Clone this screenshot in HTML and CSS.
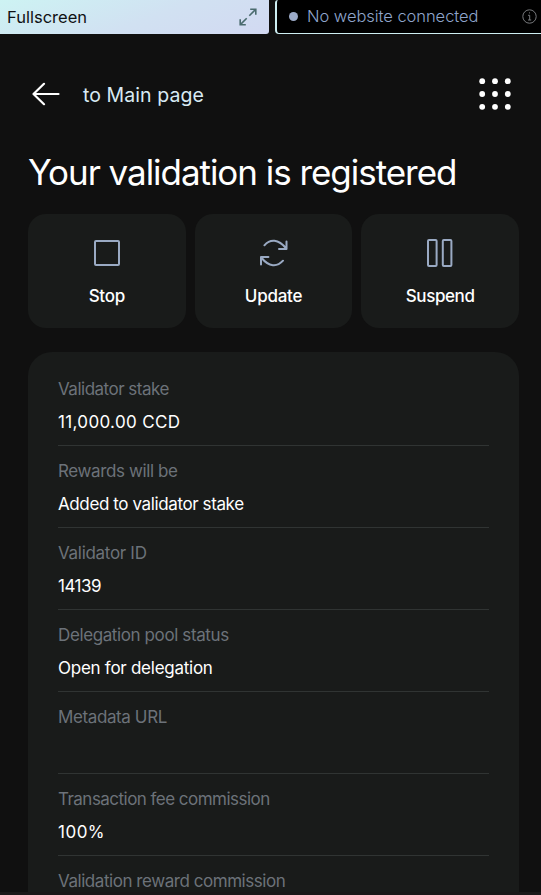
FILE: index.html
```
<!DOCTYPE html>
<html lang="en">
<head>
<meta charset="utf-8">
<title>Validation</title>
<link rel="stylesheet" href="styles.css">
</head>
<body>
<div class="topbar">
  <div class="fullscreen"><span>Fullscreen</span>
    <svg width="18" height="18" viewBox="0 0 18 18" fill="none" stroke="#4a6b6e" stroke-width="1.6"><path d="M10.3 7.7L16.4 1.6M11.2 1.2H16.8V6.8M7.7 10.3L1.6 16.4M1.2 11.2V16.8H6.8"/></svg>
  </div>
  <div class="connection"><i class="dot"></i><span class="status">No website connected</span>
    <svg width="15" height="15" viewBox="0 0 15 15" fill="none" stroke="#77797c"><circle cx="7.5" cy="7.5" r="6.7"/><path d="M6 6.3H7.7V11M6 11H9.2M7 3.9H8" /></svg>
  </div>
</div>
<header class="nav">
  <svg width="28" height="24" viewBox="0 0 28 24" fill="none" stroke="#fff" stroke-width="2.2" stroke-linecap="round" stroke-linejoin="round"><path d="M26.5 12H1.5M12 1.8L1.5 12L12 22.2"/></svg>
  <span class="back">to Main page</span>
  <svg class="menu" width="34" height="34" viewBox="0 0 34 34" fill="#fff"><circle cx="4.2" cy="4.2" r="2.9"/><circle cx="17" cy="4.2" r="2.9"/><circle cx="29.8" cy="4.2" r="2.9"/><circle cx="4.2" cy="17" r="2.9"/><circle cx="17" cy="17" r="2.9"/><circle cx="29.8" cy="17" r="2.9"/><circle cx="4.2" cy="29.8" r="2.9"/><circle cx="17" cy="29.8" r="2.9"/><circle cx="29.8" cy="29.8" r="2.9"/></svg>
</header>
<h1>Your validation is registered</h1>
<div class="actions">
  <div class="action">
    <svg width="32" height="32" viewBox="0 0 32 32" fill="none" stroke="#9aaac3" stroke-width="2"><rect x="4" y="4" width="24" height="24" rx="1"/></svg>
    <span>Stop</span>
  </div>
  <div class="action">
    <svg width="32" height="32" viewBox="0 0 32 32" fill="none" stroke="#9aaac3" stroke-width="2" stroke-linecap="round" stroke-linejoin="round"><path d="M7.4 8.3C13.2 1.8 21.2 1.8 29.2 11.5M29.5 4.6V12H22M26 23.7C20.1 30.2 12.1 30.2 4.2 20.5M4 27.4V20H11.4"/></svg>
    <span>Update</span>
  </div>
  <div class="action">
    <svg width="32" height="32" viewBox="0 0 32 32" fill="none" stroke="#9aaac3" stroke-width="2"><rect x="4" y="3" width="8.6" height="26" rx="1"/><rect x="18.8" y="3" width="8.6" height="26" rx="1"/></svg>
    <span class="t3">Suspend</span>
  </div>
</div>
<dl class="card">
  <div class="row"><dt class="t5">Validator stake</dt><dd class="w3">11,000.00 CCD</dd></div>
  <div class="row"><dt class="t4">Rewards will be</dt><dd class="t4">Added to validator stake</dd></div>
  <div class="row"><dt class="t2">Validator ID</dt><dd class="t6">14139</dd></div>
  <div class="row"><dt class="t4">Delegation pool status</dt><dd class="t3">Open for delegation</dd></div>
  <div class="row"><dt class="t4">Metadata URL</dt><dd></dd></div>
  <div class="row"><dt class="t7">Transaction fee commission</dt><dd class="w5">100%</dd></div>
  <div class="row"><dt class="t8">Validation reward commission</dt><dd></dd></div>
</dl>
<div class="edge"></div>
</body>
</html>
```
FILE: styles.css
```
* { box-sizing: border-box; margin: 0; padding: 0; }
body {
  height: 895px;
  overflow: hidden;
  background: #101010;
  color: #fff;
  font-family: Inter, "Liberation Sans", sans-serif;
  font-size: 17px;
  line-height: 24px;
}
svg { display: block; flex: none; }
.topbar { display: flex; gap: 6px; height: 34px; font-size: 16.5px; }
.fullscreen {
  display: flex; align-items: center; justify-content: space-between;
  width: 269px; padding: 0 12px 1px 7px;
  color: #101214;
  background: linear-gradient(160deg, #cdf3f3, #d1e1f2 55%, #d2d9f2);
  border-bottom-right-radius: 3px;
}
.connection {
  display: flex; align-items: center; flex: 1;
  padding: 0 4px 1px 12px;
  background: #000;
  border: solid #cdeef2; border-width: 0 0 1.5px 2px;
  border-bottom-left-radius: 4px;
  border-top-left-radius: 3px;
}
.dot { width: 9px; height: 9px; margin-right: 9px; border-radius: 50%; background: #9cabc8; }
.status { flex: 1; color: #8fa5cc; letter-spacing: -0.05px; font-weight: 350; white-space: nowrap; }
.nav { display: flex; align-items: center; height: 120px; padding: 0 29px 0 32px; }
.back { flex: 1; margin-left: 23px; padding-top: 2px; font-size: 19.5px; letter-spacing: 0.07px; color: #d8eaf4; }
h1 { height: 60px; margin-left: 28px; font-size: 35px; line-height: 36px; font-weight: 400; letter-spacing: -1.04px; white-space: nowrap; }
.actions { display: grid; grid-template-columns: repeat(3, 1fr); gap: 9px; margin: 0 22px 0 28px; }
.action {
  display: flex; flex-direction: column; align-items: center; gap: 15px;
  height: 114px; padding-top: 23px;
  border-radius: 18px; background: #191b1a;
  font-weight: 500; letter-spacing: -0.25px;
}
.card { margin: 24px 22px 0 28px; padding: 12px 30px 0; border-radius: 24px; background: #191b1a; }
.row { height: 82px; padding-top: 13px; border-bottom: 1px solid #303433; }
dt { color: #6c7279; }
dd { margin-top: 9px; }
.t2 { letter-spacing: -0.3px; }
.t3 { letter-spacing: -0.26px; }
.action .t3 { letter-spacing: -0.4px; }
.t4 { letter-spacing: -0.39px; }
.t5 { letter-spacing: -0.5px; }
.t6 { letter-spacing: -0.5px; }
.t7 { letter-spacing: -0.53px; }
.t8 { letter-spacing: -0.45px; }
.w3 { letter-spacing: 0.34px; }
.w5 { letter-spacing: 0.5px; }
.edge { position: fixed; left: 0; right: 0; bottom: 0; height: 3px; background: #1a1819; }
```
